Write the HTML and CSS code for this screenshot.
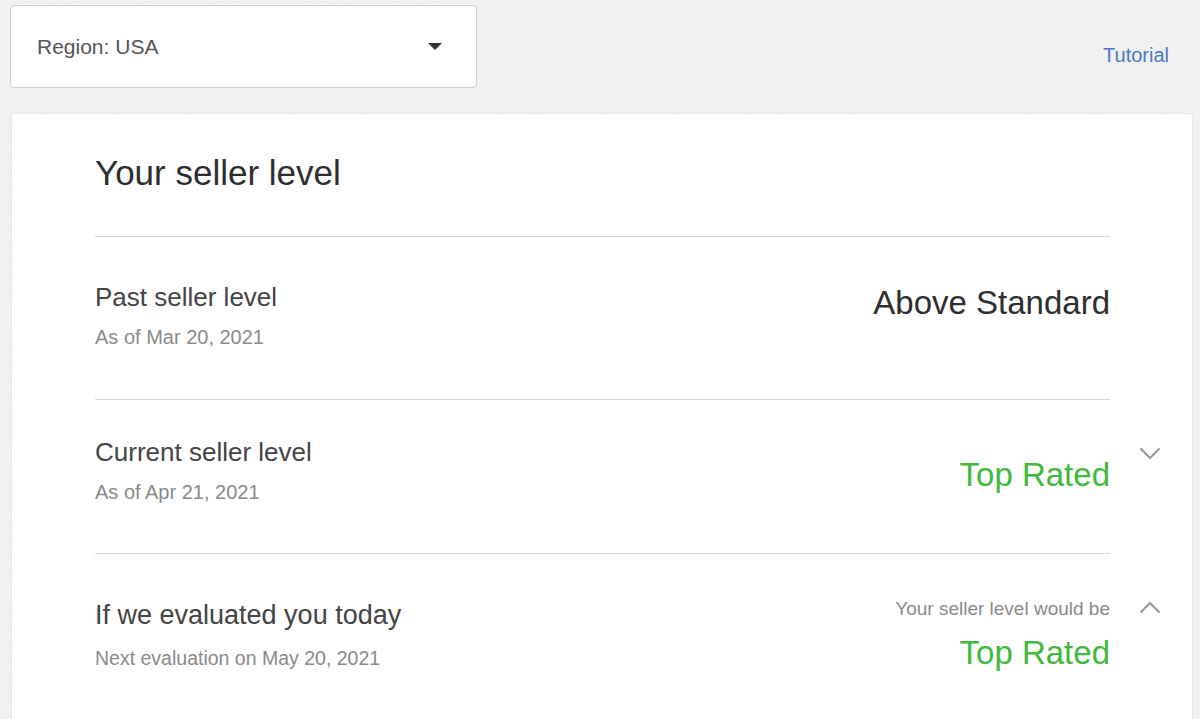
FILE: index.html
```html
<!DOCTYPE html>
<html lang="en">
<head>
<meta charset="utf-8">
<title>Seller level</title>
<link rel="stylesheet" href="styles.css">
</head>
<body>
<div class="page">
  <div class="topbar">
    <div class="select">
      <span class="select-label">Region: USA</span>
      <span class="select-caret"></span>
    </div>
    <a class="tutorial" href="#">Tutorial</a>
  </div>

  <div class="card">
    <div class="section">
      <div class="section-body section-body--title">
        <h1 class="title">Your seller level</h1>
      </div>
      <div class="section-toggle"></div>
    </div>

    <div class="section">
      <div class="section-body section-body--past">
        <div class="info">
          <div class="label">Past seller level</div>
          <div class="sub">As of Mar 20, 2021</div>
        </div>
        <div class="value value--past">Above Standard</div>
      </div>
      <div class="section-toggle"></div>
    </div>

    <div class="section">
      <div class="section-body section-body--current">
        <div class="info">
          <div class="label">Current seller level</div>
          <div class="sub">As of Apr 21, 2021</div>
        </div>
        <div class="value value--good value--current">Top Rated</div>
      </div>
      <div class="section-toggle section-toggle--current">
        <svg class="chevron" width="22" height="13" viewBox="0 0 22 13"><polyline points="1.5,1.5 11,11 20.5,1.5" fill="none" stroke="#9a9a9a" stroke-width="2.2"/></svg>
      </div>
    </div>

    <div class="section">
      <div class="section-body section-body--forecast">
        <div class="info">
          <div class="label label--forecast">If we evaluated you today</div>
          <div class="sub sub--forecast">Next evaluation on May 20, 2021</div>
        </div>
        <div class="forecast">
          <div class="forecast-note">Your seller level would be</div>
          <div class="value value--good value--forecast">Top Rated</div>
        </div>
      </div>
      <div class="section-toggle section-toggle--forecast">
        <svg class="chevron" width="22" height="13" viewBox="0 0 22 13"><polyline points="1.5,11.5 11,2 20.5,11.5" fill="none" stroke="#9a9a9a" stroke-width="2.2"/></svg>
      </div>
    </div>
  </div>
</div>
</body>
</html>
```

FILE: styles.css
```css
html, body {
  margin: 0;
  padding: 0;
}

body {
  background-color: #f2f2f2;
  background-image: repeating-linear-gradient(45deg, rgba(0,0,0,0.012) 0 1px, transparent 1px 3px);
  font-family: "Liberation Sans", Arial, Helvetica, sans-serif;
  color: #333;
  height: 719px;
  overflow: hidden;
}

.page {
  padding: 5px 7px 0 10px;
}

.topbar {
  display: flex;
  justify-content: space-between;
  align-items: flex-start;
}

.select {
  box-sizing: border-box;
  width: 467px;
  height: 83px;
  background: #fff;
  border: 1px solid #cfcfcf;
  border-radius: 4px;
  display: flex;
  align-items: center;
  justify-content: space-between;
  padding: 0 34px 0 26px;
}

.select-label {
  font-size: 21px;
  color: #555;
  line-height: 24px;
}

.select-caret {
  width: 0;
  height: 0;
  border-left: 7px solid transparent;
  border-right: 7px solid transparent;
  border-top: 7px solid #333;
}

.tutorial {
  margin-top: 38px;
  margin-right: 24px;
  font-size: 20px;
  line-height: 24px;
  color: #4a78c8;
  text-decoration: none;
}

.card {
  margin: 25px 0 0 1px;
  background: #fff;
  border: 1px solid #e6e6e6;
  border-radius: 2px;
  padding: 39px 0 80px 83px;
}

.section {
  display: grid;
  grid-template-columns: 1fr 82px;
}

.section-body {
  display: flex;
  justify-content: space-between;
  align-items: flex-start;
  border-bottom: 1px solid #d6d6d6;
}

.section-body--title {
  padding-bottom: 43px;
}

.section-body--past {
  padding: 45px 0 50px;
}

.section-body--current {
  padding: 37px 0 49px;
}

.section-body--forecast {
  padding: 44px 0 0;
  border-bottom: none;
}

.title {
  margin: 0;
  font-size: 35px;
  line-height: 40px;
  font-weight: normal;
  color: #2e2e2e;
}

.info {
  display: flex;
  flex-direction: column;
}

.label {
  font-size: 26px;
  line-height: 30px;
  color: #444;
}

.label--forecast {
  margin-top: 1px;
  font-size: 27px;
  line-height: 32px;
}

.sub {
  margin-top: 13px;
  font-size: 20px;
  line-height: 24px;
  color: #8a8a8a;
}

.sub--forecast {
  margin-top: 15px;
  font-size: 19.5px;
}

.value {
  font-size: 33px;
  line-height: 38px;
  color: #2e2e2e;
}

.value--past {
  margin-top: 2px;
}

.value--current {
  margin-top: 19px;
}

.value--good {
  color: #42b83c;
}

.forecast {
  display: flex;
  flex-direction: column;
  align-items: flex-end;
}

.forecast-note {
  font-size: 19px;
  line-height: 22px;
  color: #8a8a8a;
}

.value--forecast {
  margin-top: 14px;
}

.section-toggle {
  padding-left: 29px;
}

.section-toggle--current {
  padding-top: 47px;
}

.section-toggle--forecast {
  padding-top: 47px;
}

.chevron {
  display: block;
}
```
